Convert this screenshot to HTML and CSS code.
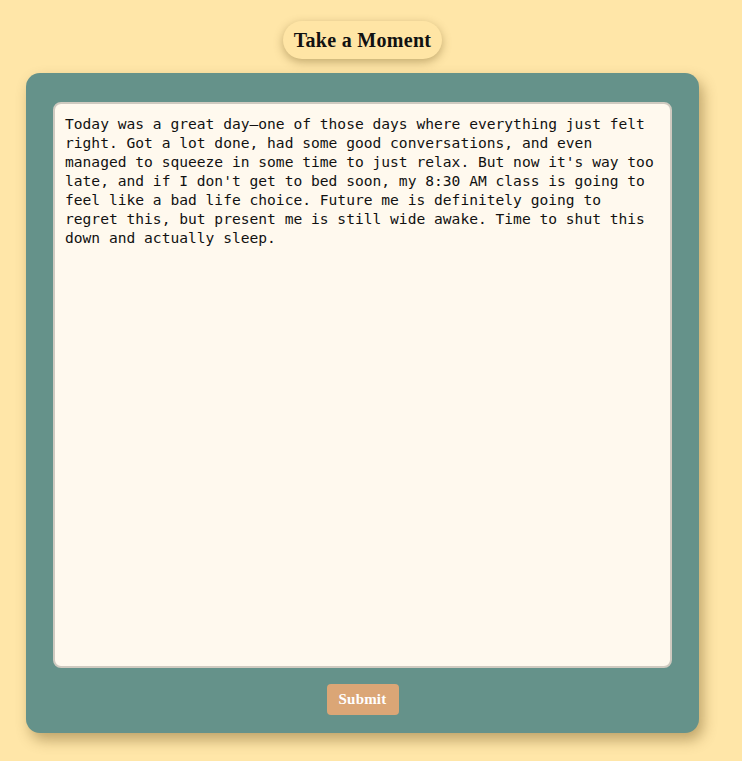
FILE: index.html
```html
<!DOCTYPE html>
<html>
<head>
<meta charset="utf-8">
<link rel="stylesheet" href="styles.css">
</head>
<body>
<div class="page">
  <h1 class="title">Take a Moment</h1>
  <div class="card">
    <div class="entry">Today was a great day—one of those days where everything just felt right. Got a lot done, had some good conversations, and even managed to squeeze in some time to just relax. But now it's way too late, and if I don't get to bed soon, my 8:30 AM class is going to feel like a bad life choice. Future me is definitely going to regret this, but present me is still wide awake. Time to shut this down and actually sleep.</div>
    <div class="actions"><button class="submit">Submit</button></div>
  </div>
</div>
</body>
</html>
```
FILE: styles.css
```css
html, body {
  margin: 0;
  padding: 0;
  background: #ffe6a8;
}
.page {
  display: flex;
  flex-direction: column;
  align-items: center;
  padding-top: 21px;
  padding-bottom: 28px;
  width: 725px;
}
.title {
  margin: 0;
  height: 38px;
  box-sizing: border-box;
  padding: 0 11px;
  display: flex;
  align-items: center;
  border-radius: 19px;
  background: #ffe5a5;
  box-shadow: 0 3px 10px rgba(120, 95, 40, 0.45);
  font-family: "Liberation Serif", serif;
  font-weight: bold;
  font-size: 20px;
  color: #111;
  letter-spacing: 0.3px;
}
.card {
  margin-top: 14px;
  width: 673px;
  height: 660px;
  box-sizing: border-box;
  background: #65928a;
  border-radius: 14px;
  box-shadow: 4px 7px 14px rgba(110, 85, 30, 0.45);
  padding: 29px 27px 17px;
  display: flex;
  flex-direction: column;
}
.entry {
  height: 566px;
  box-sizing: border-box;
  background: #fff9ee;
  border: 2px solid #cfcac0;
  border-radius: 8px;
  padding: 10px 10px;
  font-family: "DejaVu Sans Mono", monospace;
  font-size: 14.6px;
  line-height: 19px;
  color: #111;
  white-space: pre-wrap;
}
.actions {
  display: flex;
  justify-content: center;
  margin-top: 16px;
}
.submit {
  width: 72px;
  height: 31px;
  border: none;
  border-radius: 4px;
  background: #dba676;
  color: #fff;
  font-family: "Liberation Serif", serif;
  font-weight: bold;
  font-size: 15px;
  letter-spacing: 0.2px;
  padding: 0;
}
```
